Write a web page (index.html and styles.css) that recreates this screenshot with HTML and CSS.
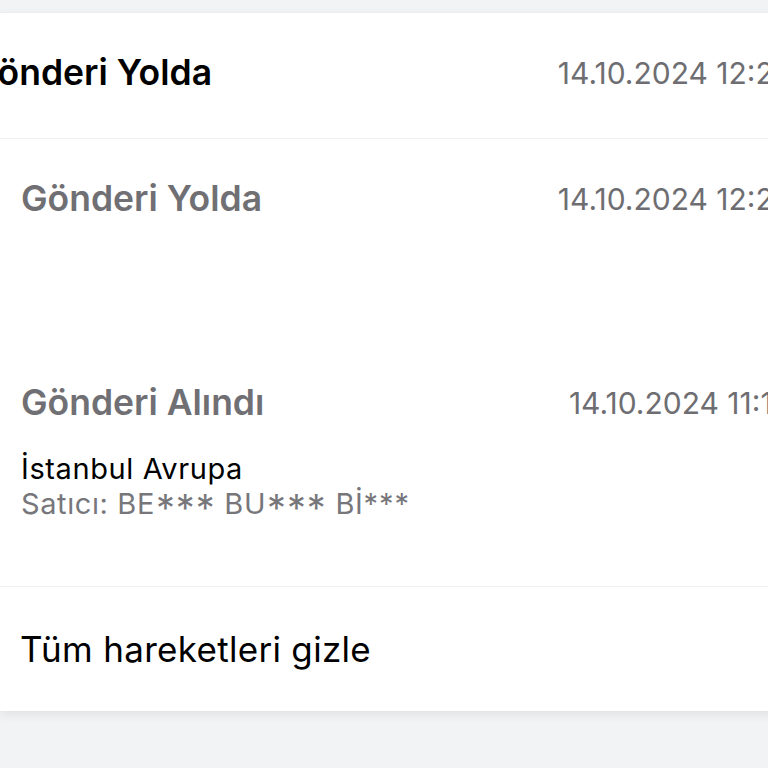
FILE: index.html
```html
<!DOCTYPE html>
<html lang="tr">
<head>
    <meta charset="UTF-8">
    <meta name="viewport" content="width=device-width, initial-scale=1.0">
    <title>Kargo Hareketleri</title>
    <link rel="stylesheet" href="styles.css">
</head>
<body>
    <div class="card">
        <div class="head">
            <span class="head-title">Gönderi Yolda</span>
            <span class="date">14.10.2024 12:25</span>
        </div>
        <div class="events">
            <div class="event event-short">
                <div class="event-row">
                    <span class="event-title">Gönderi Yolda</span>
                    <span class="date">14.10.2024 12:25</span>
                </div>
            </div>
            <div class="event">
                <div class="event-row">
                    <span class="event-title">Gönderi Alındı</span>
                    <span class="date">14.10.2024 11:14</span>
                </div>
                <div class="place">İstanbul Avrupa</div>
                <div class="seller">Satıcı: BE<span class="mask">***</span> BU<span class="mask">***</span> Bİ<span class="mask-end">***</span></div>
            </div>
        </div>
        <div class="toggle">Tüm hareketleri gizle</div>
    </div>
</body>
</html>
```

FILE: styles.css
```css
html, body {
    overflow: hidden;
}
body {
    font-family: Inter, "Noto Sans", sans-serif;
    background-color: #f2f3f5;
    margin: 0;
    padding-top: 12px;
    height: 756px;
}
.card {
    width: 812px;
    background-color: white;
    border-top: 1px solid #eceef1;
    box-shadow: 0px 4px 10px rgba(0, 0, 0, 0.07);
}
.head {
    height: 119px;
    display: flex;
    align-items: center;
    justify-content: space-between;
    padding: 0 20px 6px 0;
    border-bottom: 1px solid #f0f0f2;
}
.head-title {
    margin-left: -29px;
    font-size: 35.5px;
    font-weight: 600;
    color: #000;
}
.date {
    font-size: 30px;
    color: #6e6e72;
    white-space: nowrap;
}
.event {
    padding: 38px 20px 65px 21px;
}
.event-short {
    height: 166px;
    padding-bottom: 0;
}
.event-row {
    display: flex;
    justify-content: space-between;
    align-items: center;
    line-height: 44px;
}
.event-title {
    font-size: 35.5px;
    font-weight: 600;
    color: #707074;
}
.place {
    margin-top: 26px;
    font-size: 29px;
    letter-spacing: 0.6px;
    line-height: 35px;
    color: #000;
}
.seller {
    font-size: 29px;
    letter-spacing: 0.6px;
    line-height: 35px;
    color: #77777b;
}
.mask {
    font-size: 1.3em;
    line-height: 0;
    vertical-align: -0.22em;
    letter-spacing: 1px;
    margin-left: 1px;
}
.mask-end {
    letter-spacing: 1px;
}
.toggle {
    height: 124px;
    display: flex;
    align-items: center;
    padding-left: 20px;
    border-top: 1px solid #f0f0f2;
    font-size: 35px;
    letter-spacing: 0.3px;
    color: #000;
}
```
